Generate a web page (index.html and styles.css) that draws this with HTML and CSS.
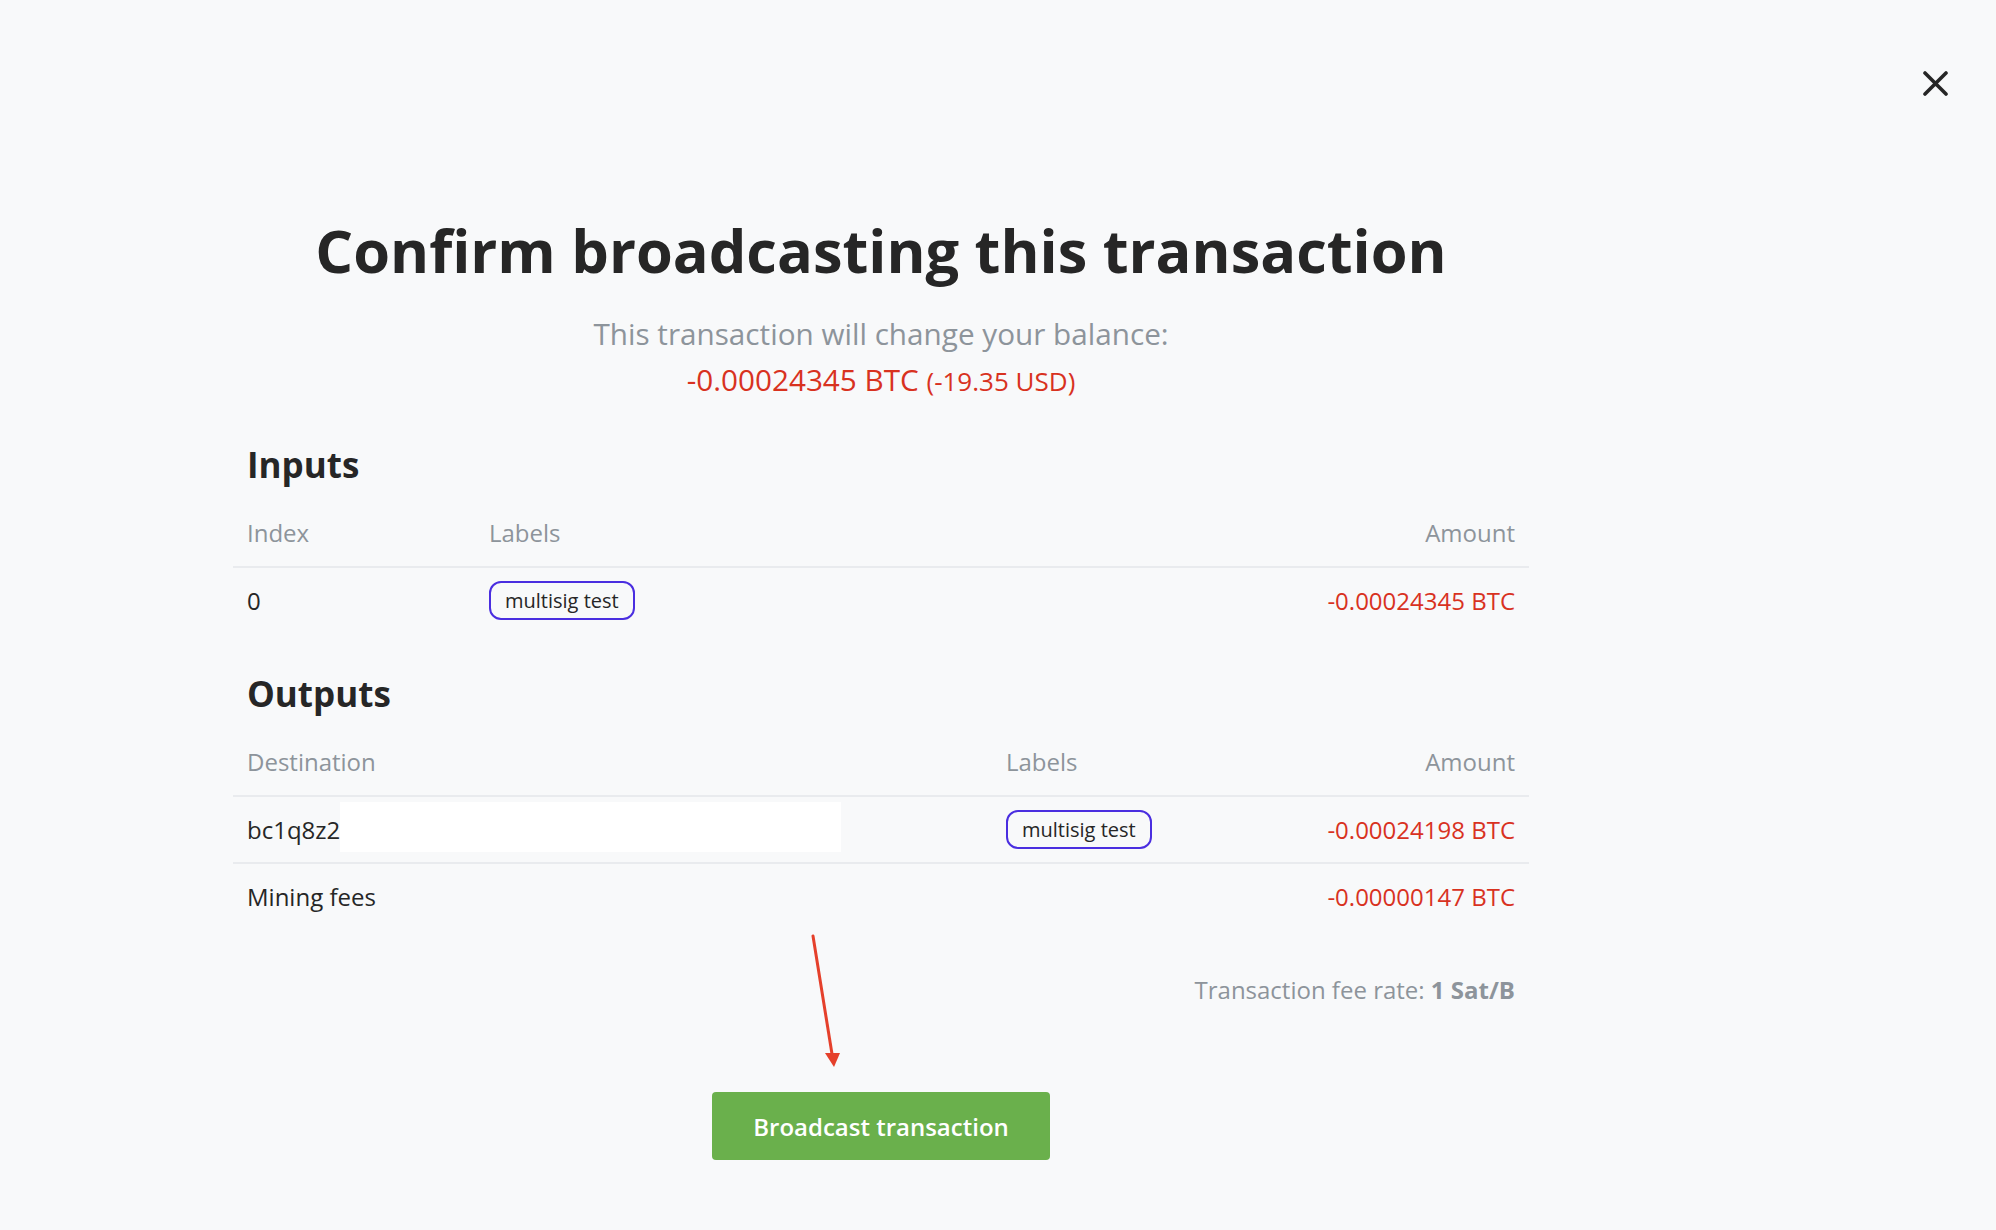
FILE: index.html
```html
<!DOCTYPE html>
<html lang="en">
<head>
<meta charset="utf-8">
<title>Confirm broadcasting this transaction</title>
<link rel="stylesheet" href="styles.css">
</head>
<body>
<div class="page">
  <div class="topbar">
    <button class="close" aria-label="Close">
      <svg width="25" height="25" viewBox="0 0 25 25"><path d="M2 2 L23 23 M23 2 L2 23" stroke="#262626" stroke-width="3.6" stroke-linecap="round" fill="none"/></svg>
    </button>
  </div>
  <main class="modal">
    <h1 class="title">Confirm broadcasting this transaction</h1>
    <p class="subtitle">This transaction will change your balance:</p>
    <p class="balance">-0.00024345 BTC <span class="fiat">(-19.35 USD)</span></p>

    <h2 class="section-title">Inputs</h2>
    <div class="tbl tbl-inputs">
      <div class="row head">
        <div class="cell">Index</div>
        <div class="cell">Labels</div>
        <div class="cell right">Amount</div>
      </div>
      <div class="row">
        <div class="cell">0</div>
        <div class="cell"><span class="pill">multisig test</span></div>
        <div class="cell right neg">-0.00024345 BTC</div>
      </div>
    </div>

    <h2 class="section-title outputs">Outputs</h2>
    <div class="tbl tbl-outputs">
      <div class="row head">
        <div class="cell">Destination</div>
        <div class="cell">Labels</div>
        <div class="cell right">Amount</div>
      </div>
      <div class="row">
        <div class="cell dest">bc1q8z2<span class="redact"></span></div>
        <div class="cell"><span class="pill">multisig test</span></div>
        <div class="cell right neg">-0.00024198 BTC</div>
      </div>
      <div class="row">
        <div class="cell">Mining fees</div>
        <div class="cell"></div>
        <div class="cell right neg">-0.00000147 BTC</div>
      </div>
    </div>

    <p class="feerate">Transaction fee rate: <b>1 Sat/B</b></p>

    <div class="actions">
      <button class="broadcast">Broadcast transaction</button>
    </div>
  </main>
  <svg class="arrow" width="40" height="140" viewBox="0 0 40 140">
    <line x1="8" y1="6" x2="27" y2="124" stroke="#e5402b" stroke-width="3" stroke-linecap="round"/>
    <polygon points="20,123 35,123 29,137" fill="#e5402b"/>
  </svg>
</div>
</body>
</html>
```

FILE: styles.css
```css
* { box-sizing: border-box; }

html, body {
  margin: 0;
  padding: 0;
  background: #f8f9fa;
}

body {
  font-family: "Open Sans", "Noto Sans", "Liberation Sans", sans-serif;
  color: #262626;
  font-size: 24px;
  line-height: 32px;
}

.page {
  position: relative;
  min-height: 1230px;
}

.topbar {
  display: flex;
  justify-content: flex-end;
  padding: 71px 48px 0 0;
}

.close {
  width: 25px;
  height: 25px;
  padding: 0;
  margin: 0;
  border: 0;
  background: none;
  display: block;
  cursor: pointer;
}
.close svg { display: block; }

.modal {
  width: 1296px;
  margin: 114px 0 0 233px;
}

.title {
  margin: 0;
  font-size: 59.5px;
  line-height: 80px;
  font-weight: 700;
  text-align: center;
  color: #262626;
}

.subtitle {
  margin: 21px 0 0;
  font-size: 29.7px;
  line-height: 46px;
  color: #8d949b;
  text-align: center;
}

.balance {
  margin: 0;
  font-size: 29.7px;
  line-height: 46px;
  color: #d8321f;
  text-align: center;
}
.balance .fiat { font-size: 26px; }

.section-title {
  margin: 38px 0 0;
  padding: 0 14px;
  font-size: 35px;
  line-height: 46px;
  font-weight: 700;
  color: #262626;
}
.section-title.outputs { margin-top: 38px; }

.tbl-inputs .row { display: grid; grid-template-columns: 242px 1fr auto; }
.tbl-outputs .row { display: grid; grid-template-columns: 759px 1fr auto; }

.row {
  align-items: center;
  height: 67px;
  border-bottom: 2px solid #e9ebee;
}
.row:last-child { border-bottom: 0; height: 65px; }

.row.head {
  height: 80px;
  align-items: end;
  padding-bottom: 17px;
  color: #8d949b;
}

.cell {
  padding: 0 14px;
  white-space: nowrap;
}
.cell.right { text-align: right; }
.neg { color: #d8321f; }

.dest {
  display: flex;
  align-items: center;
}
.redact {
  display: inline-block;
  width: 501px;
  height: 50px;
  background: #ffffff;
  margin-top: -6px;
}

.pill {
  display: inline-block;
  border: 2px solid #4a2ee0;
  border-radius: 12px;
  padding: 0 14px;
  font-size: 20px;
  line-height: 35px;
  color: #262626;
  vertical-align: middle;
}

.feerate {
  margin: 45px 0 0;
  padding: 0 14px;
  text-align: right;
  color: #8d949b;
}
.feerate b { font-weight: 700; }

.actions {
  display: flex;
  justify-content: center;
  margin-top: 86px;
}

.broadcast {
  width: 338px;
  height: 68px;
  border: 0;
  border-radius: 4px;
  background: #6ab04c;
  color: #ffffff;
  font-family: "Open Sans", "Noto Sans", sans-serif;
  font-size: 24px;
  font-weight: 600;
  cursor: pointer;
}

.arrow {
  position: absolute;
  left: 805px;
  top: 930px;
}
```
